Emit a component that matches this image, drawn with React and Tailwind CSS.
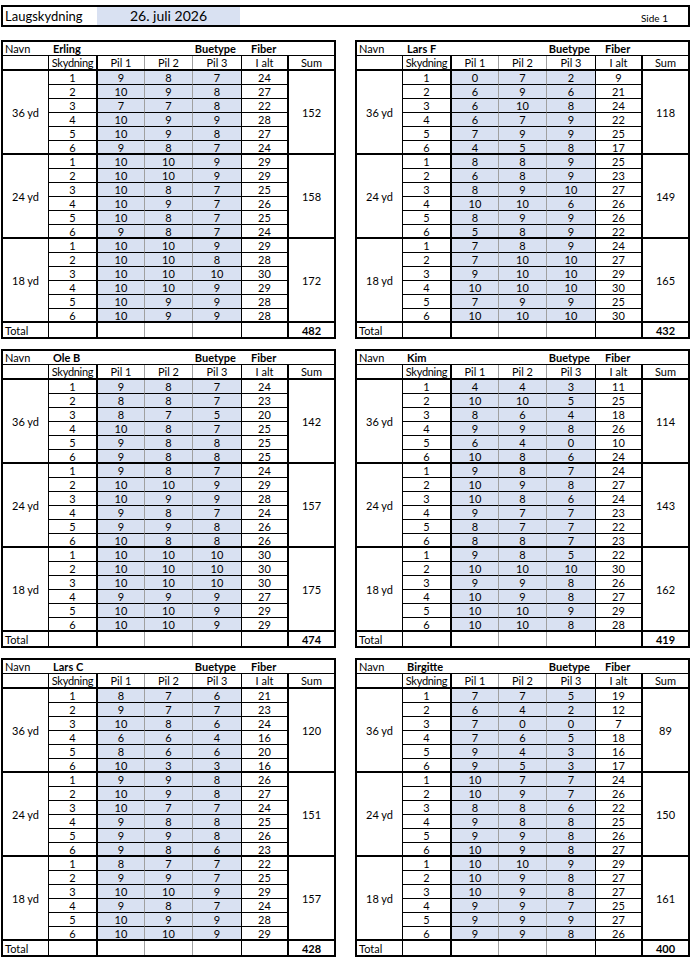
import React from "react";

const T = [
  {
    name: "Erling", bue: "Fiber", total: 482,
    groups: [
      { label: "36 yd", sum: 152, rows: [[9,8,7,24],[10,9,8,27],[7,7,8,22],[10,9,9,28],[10,9,8,27],[9,8,7,24]] },
      { label: "24 yd", sum: 158, rows: [[10,10,9,29],[10,10,9,29],[10,8,7,25],[10,9,7,26],[10,8,7,25],[9,8,7,24]] },
      { label: "18 yd", sum: 172, rows: [[10,10,9,29],[10,10,8,28],[10,10,10,30],[10,10,9,29],[10,9,9,28],[10,9,9,28]] },
    ],
  },
  {
    name: "Lars F", bue: "Fiber", total: 432,
    groups: [
      { label: "36 yd", sum: 118, rows: [[0,7,2,9],[6,9,6,21],[6,10,8,24],[6,7,9,22],[7,9,9,25],[4,5,8,17]] },
      { label: "24 yd", sum: 149, rows: [[8,8,9,25],[6,8,9,23],[8,9,10,27],[10,10,6,26],[8,9,9,26],[5,8,9,22]] },
      { label: "18 yd", sum: 165, rows: [[7,8,9,24],[7,10,10,27],[9,10,10,29],[10,10,10,30],[7,9,9,25],[10,10,10,30]] },
    ],
  },
  {
    name: "Ole B", bue: "Fiber", total: 474,
    groups: [
      { label: "36 yd", sum: 142, rows: [[9,8,7,24],[8,8,7,23],[8,7,5,20],[10,8,7,25],[9,8,8,25],[9,8,8,25]] },
      { label: "24 yd", sum: 157, rows: [[9,8,7,24],[10,10,9,29],[10,9,9,28],[9,8,7,24],[9,9,8,26],[10,8,8,26]] },
      { label: "18 yd", sum: 175, rows: [[10,10,10,30],[10,10,10,30],[10,10,10,30],[9,9,9,27],[10,10,9,29],[10,10,9,29]] },
    ],
  },
  {
    name: "Kim", bue: "Fiber", total: 419,
    groups: [
      { label: "36 yd", sum: 114, rows: [[4,4,3,11],[10,10,5,25],[8,6,4,18],[9,9,8,26],[6,4,0,10],[10,8,6,24]] },
      { label: "24 yd", sum: 143, rows: [[9,8,7,24],[10,9,8,27],[10,8,6,24],[9,7,7,23],[8,7,7,22],[8,8,7,23]] },
      { label: "18 yd", sum: 162, rows: [[9,8,5,22],[10,10,10,30],[9,9,8,26],[10,9,8,27],[10,10,9,29],[10,10,8,28]] },
    ],
  },
  {
    name: "Lars C", bue: "Fiber", total: 428,
    groups: [
      { label: "36 yd", sum: 120, rows: [[8,7,6,21],[9,7,7,23],[10,8,6,24],[6,6,4,16],[8,6,6,20],[10,3,3,16]] },
      { label: "24 yd", sum: 151, rows: [[9,9,8,26],[10,9,8,27],[10,7,7,24],[9,8,8,25],[9,9,8,26],[9,8,6,23]] },
      { label: "18 yd", sum: 157, rows: [[8,7,7,22],[9,9,7,25],[10,10,9,29],[9,8,7,24],[10,9,9,28],[10,10,9,29]] },
    ],
  },
  {
    name: "Birgitte", bue: "Fiber", total: 400,
    groups: [
      { label: "36 yd", sum: 89, rows: [[7,7,5,19],[6,4,2,12],[7,0,0,7],[7,6,5,18],[9,4,3,16],[9,5,3,17]] },
      { label: "24 yd", sum: 150, rows: [[10,7,7,24],[10,9,7,26],[8,8,6,22],[9,8,8,25],[9,9,8,26],[10,9,8,27]] },
      { label: "18 yd", sum: 161, rows: [[10,10,9,29],[10,9,8,27],[10,9,8,27],[9,9,7,25],[9,9,9,27],[9,9,8,26]] },
    ],
  },
];

const COLS = "grid grid-cols-[46px_49px_47px_48px_49px_47px_45px]";
const C = "flex items-center justify-center leading-none";

function Group({ g }) {
  return (
    <div className={`${COLS} grid-rows-[14px_14px_14px_14px_14px_12px] border-b-2 border-black`}>
      <div className={`${C} border-r border-black`} style={{ gridColumn: 1, gridRow: "1 / span 6" }}>
        {g.label}
      </div>
      {g.rows.map((r, i) => {
        const last = i === 5;
        const bb = last ? "" : "border-b border-black";
        const row = i + 1;
        return (
          <React.Fragment key={i}>
            <div className={`${C} border-r-2 border-black ${bb}`} style={{ gridColumn: 2, gridRow: row }}>{i + 1}</div>
            <div className={`${C} bg-[#d9e1f2] border-r border-r-[#a0a0a0] ${bb}`} style={{ gridColumn: 3, gridRow: row }}>{r[0]}</div>
            <div className={`${C} bg-[#d9e1f2] border-r border-r-[#a0a0a0] ${bb}`} style={{ gridColumn: 4, gridRow: row }}>{r[1]}</div>
            <div className={`${C} bg-[#d9e1f2] border-r border-r-black ${bb}`} style={{ gridColumn: 5, gridRow: row }}>{r[2]}</div>
            <div className={`${C} border-r-2 border-black ${bb}`} style={{ gridColumn: 6, gridRow: row }}>{r[3]}</div>
          </React.Fragment>
        );
      })}
      <div className={C} style={{ gridColumn: 7, gridRow: "1 / span 6" }}>
        {g.sum}
      </div>
    </div>
  );
}

function ScoreTable({ t }) {
  return (
    <div className="w-[335px] border-2 border-black bg-white">
      <div className={`${COLS} h-[14px] border-b border-black`}>
        <div className="flex items-center pl-[2px] leading-none">Navn</div>
        <div className="col-span-3 flex items-center pl-[4px] font-bold leading-none">{t.name}</div>
        <div className="flex items-center justify-end pr-[6px] font-bold leading-none">Buetype</div>
        <div className="col-span-2 flex items-center pl-[9px] font-bold leading-none">{t.bue}</div>
      </div>
      <div className={`${COLS} h-[15px] border-b-2 border-black`}>
        <div className="border-r border-black"></div>
        <div className={`${C} border-r-2 border-black tracking-[-0.3px]`}>Skydning</div>
        <div className={`${C} border-r border-r-[#a0a0a0]`}>Pil 1</div>
        <div className={`${C} border-r border-r-[#a0a0a0]`}>Pil 2</div>
        <div className={`${C} border-r border-black`}>Pil 3</div>
        <div className={`${C} border-r-2 border-black`}>I alt</div>
        <div className={C}>Sum</div>
      </div>
      {t.groups.map((g, i) => (
        <Group key={i} g={g} />
      ))}
      <div className={`${COLS} h-[14px]`}>
        <div className="flex items-center pl-[2px] leading-none border-r border-black">Total</div>
        <div className="border-r-2 border-black"></div>
        <div className="border-r border-r-[#a0a0a0]"></div>
        <div className="border-r border-r-[#a0a0a0]"></div>
        <div className="border-r border-black"></div>
        <div className="border-r-2 border-black"></div>
        <div className={`${C} font-bold`}>{t.total}</div>
      </div>
    </div>
  );
}

export default function App() {
  return (
    <div
      className="w-[692px] h-[957px] overflow-hidden bg-white pl-[1px] pt-[5px] text-[11px] text-black"
      style={{ fontFamily: "Lato, 'Open Sans', 'Liberation Sans', sans-serif" }}
    >
      <div className="flex h-[22px] w-[689px] border-2 border-black">
        <div className="flex w-[94px] items-center pl-[2px] text-[13px] leading-none">Laugskydning</div>
        <div className="flex w-[143px] items-center justify-center bg-[#d9e1f2] text-[14px] leading-none">26. juli 2026</div>
        <div className="flex-1"></div>
        <div className="flex items-end pb-[2px] pr-[20px] text-[10px] leading-none">Side 1</div>
      </div>
      <div className="mt-[13px] grid grid-cols-[335px_335px] gap-x-[19px] gap-y-[10px]">
        {T.map((t, i) => (
          <ScoreTable key={i} t={t} />
        ))}
      </div>
    </div>
  );
}
